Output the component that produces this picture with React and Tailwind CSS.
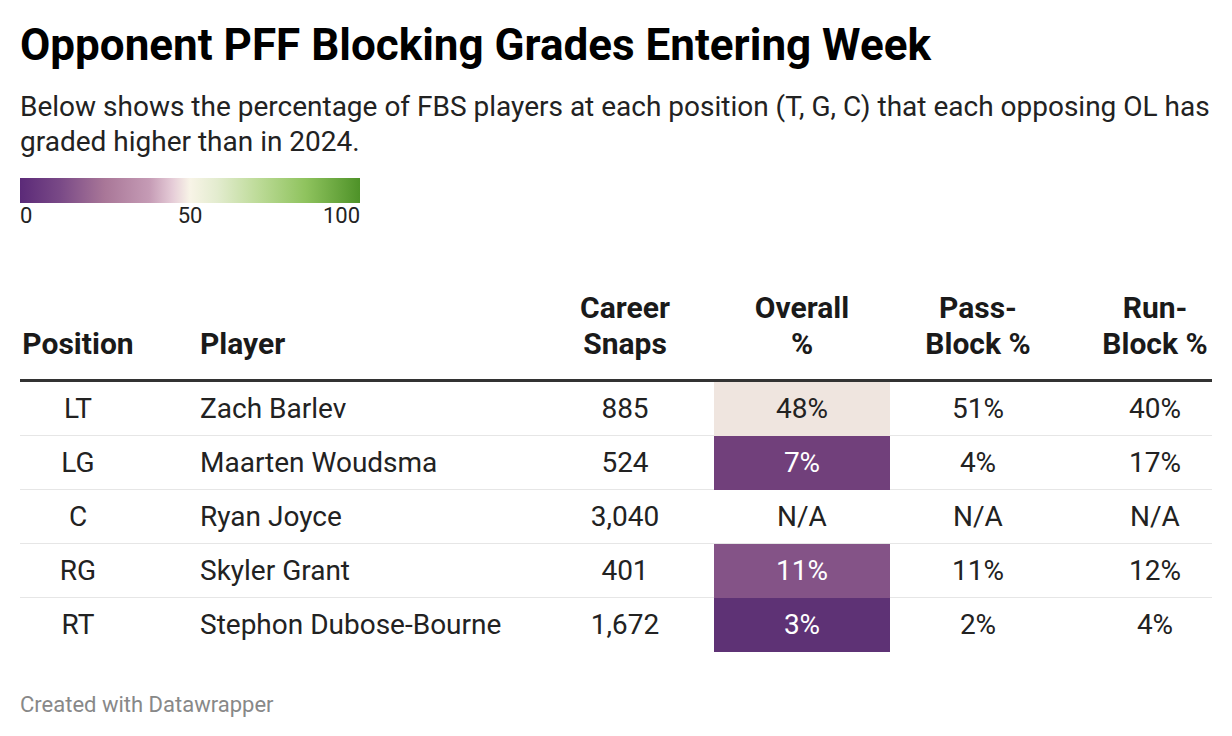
import React from "react";

const rows = [
  { pos: "LT", name: "Zach Barlev", snaps: "885", overall: "48%", bg: "#efe5df", light: false, pass: "51%", run: "40%" },
  { pos: "LG", name: "Maarten Woudsma", snaps: "524", overall: "7%", bg: "#71407b", light: true, pass: "4%", run: "17%" },
  { pos: "C", name: "Ryan Joyce", snaps: "3,040", overall: "N/A", bg: null, light: false, pass: "N/A", run: "N/A" },
  { pos: "RG", name: "Skyler Grant", snaps: "401", overall: "11%", bg: "#845387", light: true, pass: "11%", run: "12%" },
  { pos: "RT", name: "Stephon Dubose-Bourne", snaps: "1,672", overall: "3%", bg: "#5e3275", light: true, pass: "2%", run: "4%" },
];

const cols = "grid grid-cols-[116px_400px_178px_176px_176px_146px]";

export default function App() {
  return (
    <div
      className="w-[1232px] h-[736px] bg-white px-5 pt-[19px] text-[#1a1a1a]"
      style={{ fontFamily: "Roboto, 'Liberation Sans', sans-serif" }}
    >
      {/* Title */}
      <h1 className="text-[44px] font-bold leading-[52px] text-black">
        Opponent PFF Blocking Grades Entering Week
      </h1>
      <p className="mt-[18px] text-[28px] leading-[35px] text-[#222]">
        Below shows the percentage of FBS players at each position (T, G, C) that each opposing OL has graded higher than in 2024.
      </p>

      {/* Legend */}
      <div className="mt-[19px] w-[340px]">
        <div className="h-[25px] bg-[linear-gradient(to_right,#5b2a78_0%,#7a4a87_12%,#a97798_25%,#c59bb5_38%,#e6cdd8_45%,#f8f4e7_50%,#e3eccf_58%,#bddb98_70%,#8fc35e_84%,#4e9228_100%)]" />
        <div className="relative h-[26px] text-[22px] leading-[26px] text-[#222]">
          <span className="absolute left-0">0</span>
          <span className="absolute left-1/2 -translate-x-1/2">50</span>
          <span className="absolute right-0">100</span>
        </div>
      </div>

      {/* Table */}
      <div className="mt-[61px] w-[1192px]">
        <div className={`${cols} items-end pb-[17px] border-b-[3px] border-[#333] text-[30px] leading-[36px] font-bold text-[#1a1a1a]`}>
          <div className="text-center">Position</div>
          <div className="pl-[64px]">Player</div>
          <div className="text-center">Career<br />Snaps</div>
          <div className="text-center">Overall<br />%</div>
          <div className="text-center">Pass-<br />Block %</div>
          <div className="pl-[32px] text-center whitespace-nowrap">Run-<br />Block %</div>
        </div>

        {rows.map((r, i) => {
          const last = i === rows.length - 1;
          const cell = `h-[54px] flex items-center ${last ? "" : "border-b border-[#e6e6e6]"}`;
          return (
            <div key={r.pos} className={`${cols} text-[28px] text-[#222]`}>
              <div className={`${cell} justify-center`}>{r.pos}</div>
              <div className={`${cell} pl-[64px]`}>{r.name}</div>
              <div className={`${cell} justify-center tabular-nums`}>{r.snaps}</div>
              <div
                className={`${cell} justify-center ${r.light ? "text-white" : ""}`}
                style={r.bg ? { backgroundColor: r.bg, borderColor: r.bg } : undefined}
              >
                {r.overall}
              </div>
              <div className={`${cell} justify-center`}>{r.pass}</div>
              <div className={`${cell} justify-center pl-[32px]`}>{r.run}</div>
            </div>
          );
        })}
      </div>

      {/* Footer */}
      <div className="mt-[36px] text-[22px] text-[#888]">Created with Datawrapper</div>
    </div>
  );
}
